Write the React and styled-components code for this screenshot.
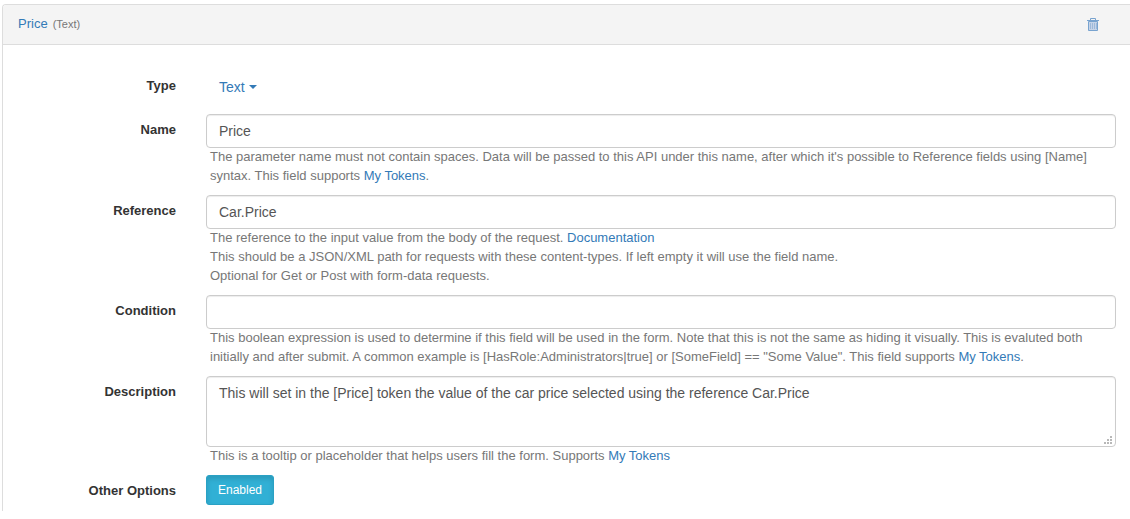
import React from 'react';
import styled, { createGlobalStyle } from 'styled-components';

const GlobalStyle = createGlobalStyle`
  *, *::before, *::after { box-sizing: border-box; }
  body {
    margin: 0;
    background: #fff;
    color: #333;
    font-family: "Liberation Sans", Arial, sans-serif;
    font-size: 13px;
    line-height: 19px;
  }
`;

const Panel = styled.section`
  margin: 4px 0 0 2px;
  border: 1px solid #ddd;
  border-width: 1px 0 0 1px;
  border-radius: 4px 0 0 0;
`;

const PanelHeader = styled.header`
  display: flex;
  align-items: center;
  justify-content: space-between;
  height: 40px;
  padding: 0 31px 1px 15px;
  background: #f4f4f4;
  border-bottom: 1px solid #ddd;
  border-radius: 3px 0 0 0;
`;

const Link = styled.a`
  color: #337ab7;
  text-decoration: none;
`;

const FieldKind = styled.small`
  margin-left: 5px;
  font-size: 11px;
  color: #777;
`;

const IconButton = styled.button`
  display: flex;
  padding: 0;
  border: 0;
  background: none;
  color: #78a3cf;
  cursor: pointer;
`;

const Form = styled.form`
  display: flex;
  flex-direction: column;
  gap: 10px;
  padding: 25px 14px 6px 0;
`;

const Row = styled.div`
  display: grid;
  grid-template-columns: 173px minmax(0, 1fr);
  column-gap: 30px;
`;

const Label = styled.label`
  padding-top: 6px;
  font-weight: bold;
  text-align: right;
`;

const controlStyle = `
  display: block;
  width: 100%;
  padding: 6px 12px;
  border: 1px solid #ccc;
  border-radius: 4px;
  background: #fff;
  box-shadow: inset 0 1px 1px rgba(0, 0, 0, 0.075);
  color: #555;
  font-family: inherit;
  font-size: 14px;
  line-height: 20px;
`;

const TextInput = styled.input`
  ${controlStyle}
  height: 34px;
`;

const TextAreaFrame = styled.div`
  position: relative;
`;

const TextArea = styled.textarea`
  ${controlStyle}
  height: 71px;
  resize: vertical;
  &::-webkit-resizer { display: none; }
`;

const Grip = styled.svg`
  position: absolute;
  right: 4px;
  bottom: 3px;
  pointer-events: none;
`;

const Help = styled.p`
  margin: -1px 0 0;
  padding-left: 4px;
  color: #777;
`;

const TypeButton = styled.button`
  display: flex;
  align-items: center;
  justify-self: start;
  gap: 4px;
  height: 34px;
  padding: 0 13px;
  border: 0;
  background: none;
  color: #337ab7;
  font-family: inherit;
  font-size: 14px;
  line-height: 20px;
  cursor: pointer;
`;

const Caret = styled.span`
  border: 4px solid transparent;
  border-top-color: currentColor;
  border-bottom: 0;
`;

const ToggleButton = styled.button`
  justify-self: start;
  height: 30px;
  padding: 0 11px;
  border: 1px solid #2aa1c4;
  border-radius: 3px;
  background: #31b0d5;
  box-shadow: inset 0 3px 5px rgba(0, 0, 0, 0.125);
  color: #fff;
  font-family: inherit;
  font-size: 12px;
  line-height: 18px;
  cursor: pointer;
`;

function TrashIcon() {
  return (
    <svg width="12" height="13" viewBox="0 0 12 13" fill="none" aria-hidden="true">
      <path d="M1.5 3.5h9v9h-9z" fill="#c6d4e8" stroke="currentColor" />
      <path d="M3.5 5v6M5.5 5v6M7.5 5v6M9.5 5v6" stroke="#9db9da" />
      <path d="M0 2.5h12M3.5 2V.5h5V2" stroke="currentColor" />
    </svg>
  );
}

function ResizeGrip() {
  return (
    <Grip width="8" height="8" viewBox="0 0 8 8" fill="#b8b8b8" aria-hidden="true">
      <path d="M6 0h2v2H6zM3 3h2v2H3zM6 3h2v2H6zM0 6h2v2H0zM3 6h2v2H3zM6 6h2v2H6z" />
    </Grip>
  );
}

function Field({ id, label, control, children }) {
  return (
    <Row>
      <Label htmlFor={id}>{label}</Label>
      <div>
        {control}
        <Help>{children}</Help>
      </div>
    </Row>
  );
}

export default function App() {
  return (
    <>
      <GlobalStyle />
      <Panel>
        <PanelHeader>
          <div>
            <Link href="#price">Price</Link>
            <FieldKind>(Text)</FieldKind>
          </div>
          <IconButton type="button" aria-label="Delete field">
            <TrashIcon />
          </IconButton>
        </PanelHeader>
        <Form>
          <Row>
            <Label htmlFor="type">Type</Label>
            <TypeButton id="type" type="button">
              Text
              <Caret />
            </TypeButton>
          </Row>
          <Field id="name" label="Name" control={<TextInput id="name" defaultValue="Price" />}>
            The parameter name must not contain spaces. Data will be passed to this API under this
            name, after which it's possible to Reference fields using [Name] syntax. This field
            supports <Link href="#tokens">My Tokens</Link>.
          </Field>
          <Field
            id="reference"
            label="Reference"
            control={<TextInput id="reference" defaultValue="Car.Price" />}
          >
            The reference to the input value from the body of the request.{' '}
            <Link href="#documentation">Documentation</Link>
            <br />
            This should be a JSON/XML path for requests with these content-types. If left empty it
            will use the field name.
            <br />
            Optional for Get or Post with form-data requests.
          </Field>
          <Field id="condition" label="Condition" control={<TextInput id="condition" />}>
            This boolean expression is used to determine if this field will be used in the form.
            Note that this is not the same as hiding it visually. This is evaluted both initially
            and after submit. A common example is [HasRole:Administrators|true] or [SomeField] ==
            "Some Value". This field supports <Link href="#tokens">My Tokens</Link>.
          </Field>
          <Field
            id="description"
            label="Description"
            control={
              <TextAreaFrame>
                <TextArea
                  id="description"
                  defaultValue="This will set in the [Price] token the value of the car price selected using the reference Car.Price"
                />
                <ResizeGrip />
              </TextAreaFrame>
            }
          >
            This is a tooltip or placeholder that helps users fill the form. Supports{' '}
            <Link href="#tokens">My Tokens</Link>
          </Field>
          <Row>
            <Label htmlFor="enabled">Other Options</Label>
            <ToggleButton id="enabled" type="button" aria-pressed="true">
              Enabled
            </ToggleButton>
          </Row>
        </Form>
      </Panel>
    </>
  );
}
